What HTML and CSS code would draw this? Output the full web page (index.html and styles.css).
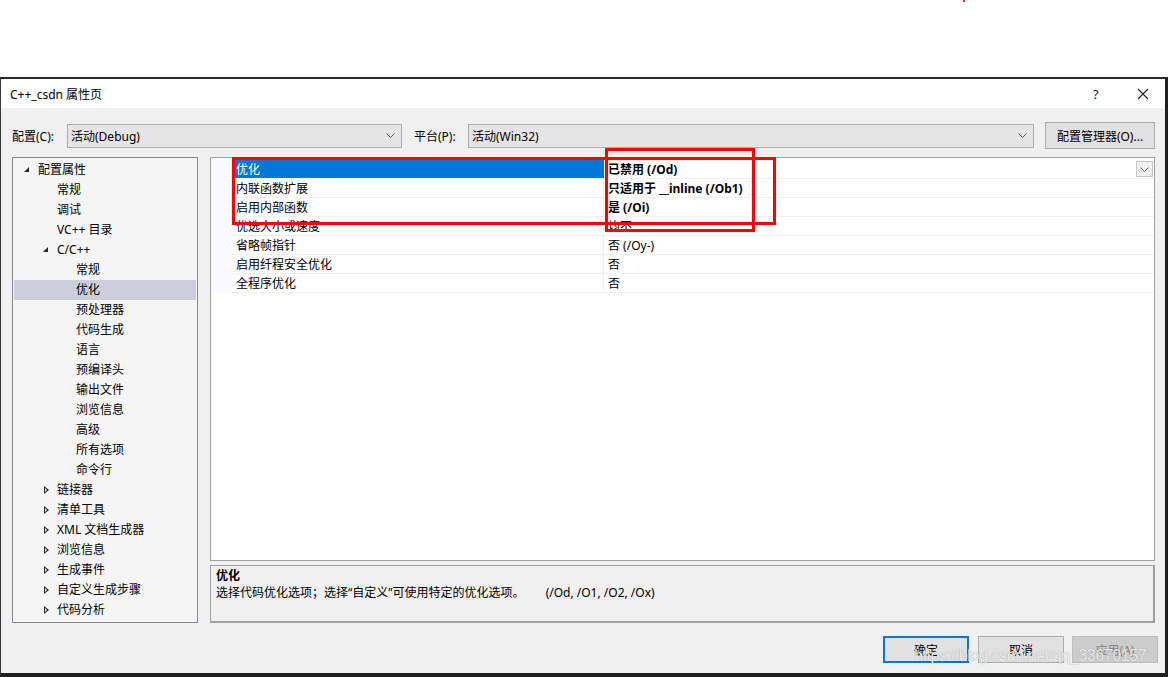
FILE: index.html
```html
<!DOCTYPE html>
<html>

<head>
    <meta charset="utf-8">
    <title>C++_csdn 属性页</title>
    <link rel="stylesheet" href="styles.css">
</head>

<body>
    <div class="top-space"></div>
    <div class="dialog">
        <div class="titlebar">
            <span class="title">C++_csdn 属性页</span>
            <span class="help">?</span>
            <svg class="close" width="12" height="12" viewBox="0 0 12 12"><path d="M1 1L11 11M11 1L1 11" stroke="#222" stroke-width="1.1" fill="none"/></svg>
        </div>
        <div class="body">
            <div class="config-row">
                <label class="lbl lbl-config">配置(C):</label>
                <div class="combo combo-config">
                    <span>活动(Debug)</span>
                    <svg width="9" height="5" viewBox="0 0 9 5"><path d="M0.5 0.5L4.5 4.5L8.5 0.5" stroke="#555" fill="none"/></svg>
                </div>
                <label class="lbl lbl-platform">平台(P):</label>
                <div class="combo combo-platform">
                    <span>活动(Win32)</span>
                    <svg width="9" height="5" viewBox="0 0 9 5"><path d="M0.5 0.5L4.5 4.5L8.5 0.5" stroke="#555" fill="none"/></svg>
                </div>
                <button class="btn btn-manager">配置管理器(O)...</button>
            </div>

            <div class="main">
                <div class="tree">
                    <div class="node lvl0"><span class="arrow open"></span>配置属性</div>
                    <div class="node lvl1"><span class="arrow"></span>常规</div>
                    <div class="node lvl1"><span class="arrow"></span>调试</div>
                    <div class="node lvl1"><span class="arrow"></span>VC++ 目录</div>
                    <div class="node lvl1"><span class="arrow open"></span>C/C++</div>
                    <div class="node lvl2"><span class="arrow"></span>常规</div>
                    <div class="node lvl2 selected"><span class="arrow"></span>优化</div>
                    <div class="node lvl2"><span class="arrow"></span>预处理器</div>
                    <div class="node lvl2"><span class="arrow"></span>代码生成</div>
                    <div class="node lvl2"><span class="arrow"></span>语言</div>
                    <div class="node lvl2"><span class="arrow"></span>预编译头</div>
                    <div class="node lvl2"><span class="arrow"></span>输出文件</div>
                    <div class="node lvl2"><span class="arrow"></span>浏览信息</div>
                    <div class="node lvl2"><span class="arrow"></span>高级</div>
                    <div class="node lvl2"><span class="arrow"></span>所有选项</div>
                    <div class="node lvl2"><span class="arrow"></span>命令行</div>
                    <div class="node lvl1"><span class="arrow closed"></span>链接器</div>
                    <div class="node lvl1"><span class="arrow closed"></span>清单工具</div>
                    <div class="node lvl1"><span class="arrow closed"></span>XML 文档生成器</div>
                    <div class="node lvl1"><span class="arrow closed"></span>浏览信息</div>
                    <div class="node lvl1"><span class="arrow closed"></span>生成事件</div>
                    <div class="node lvl1"><span class="arrow closed"></span>自定义生成步骤</div>
                    <div class="node lvl1"><span class="arrow closed"></span>代码分析</div>
                </div>

                <div class="right">
                    <div class="grid">
                        <div class="rows">
                            <div class="row selected">
                                <div class="name">优化</div>
                                <div class="value bold">已禁用 (/Od)
                                    <span class="drop"><svg width="9" height="5" viewBox="0 0 9 5"><path d="M0.5 0.5L4.5 4.5L8.5 0.5" stroke="#666" fill="none"/></svg></span>
                                </div>
                            </div>
                            <div class="row">
                                <div class="name">内联函数扩展</div>
                                <div class="value bold">只适用于 __inline (/Ob1)</div>
                            </div>
                            <div class="row">
                                <div class="name">启用内部函数</div>
                                <div class="value bold">是 (/Oi)</div>
                            </div>
                            <div class="row">
                                <div class="name">优选大小或速度</div>
                                <div class="value">均不</div>
                            </div>
                            <div class="row">
                                <div class="name">省略帧指针</div>
                                <div class="value">否 (/Oy-)</div>
                            </div>
                            <div class="row">
                                <div class="name">启用纤程安全优化</div>
                                <div class="value">否</div>
                            </div>
                            <div class="row">
                                <div class="name">全程序优化</div>
                                <div class="value">否</div>
                            </div>
                        </div>
                    </div>
                    <div class="desc">
                        <div class="desc-title">优化</div>
                        <div class="desc-text">选择代码优化选项；选择“自定义”可使用特定的优化选项。<span class="desc-flags">(/Od, /O1, /O2, /Ox)</span></div>
                    </div>
                </div>
            </div>

            <div class="buttons">
                <button class="btn btn-ok">确定</button>
                <button class="btn btn-cancel">取消</button>
                <button class="btn btn-disabled">应用(A)</button>
            </div>
        </div>
    </div>

    <!-- annotation boxes drawn over the screenshot -->
    <div class="mark mark-a"></div>
    <div class="mark mark-b"></div>
    <div class="dot"></div>
    <div class="watermark">https://blog.csdn.net/qq_33670157</div>
</body>
</html>
```

FILE: styles.css
```css
html, body {
    margin: 0;
    padding: 0;
    background: #ffffff;
}

body {
    position: relative;
    width: 1168px;
    height: 677px;
    overflow: hidden;
    font-family: "Segoe UI", "Noto Sans", "Noto Sans CJK SC", sans-serif;
    font-size: 12px;
    color: #000;
}

.top-space {
    height: 77px;
}

.dialog {
    height: 600px;
    box-sizing: border-box;
    border-top: 2px solid #2b2b2b;
    border-left: 1px solid #3a3a3a;
    border-right: 3px solid #1f1f1f;
    border-bottom: 4px solid #1f1f1f;
    display: flex;
    flex-direction: column;
}

.titlebar {
    height: 29px;
    flex: none;
    background: #fff;
    display: flex;
    align-items: center;
    padding: 0 0 0 9px;
}

.title {
    flex: 1;
    font-size: 12px;
}

.help {
    width: 14px;
    margin-right: 30px;
    font-size: 13px;
    color: #222;
}

.close {
    margin-right: 16px;
}

.body {
    flex: 1;
    background: #f0f0f0;
    padding: 14px 10px 0 11px;
}

.config-row {
    display: flex;
    align-items: center;
    height: 27px;
}

.lbl {
    flex: none;
}

.lbl-config {
    width: 55px;
}

.lbl-platform {
    width: 54px;
    margin-left: 12px;
}

.combo {
    flex: none;
    height: 24px;
    box-sizing: border-box;
    border: 1px solid #adadad;
    background: #e5e5e5;
    display: flex;
    align-items: center;
    justify-content: space-between;
    padding: 0 6px 0 3px;
}

.combo-config {
    width: 335px;
}

.combo-platform {
    width: 566px;
}

.btn {
    font-family: inherit;
    font-size: 12px;
    color: #000;
    background: #e1e1e1;
    border: 1px solid #adadad;
    height: 27px;
    width: 86px;
    padding: 0;
    box-sizing: border-box;
}

.btn-manager {
    width: 110px;
    margin-left: 11px;
}

.main {
    display: flex;
    margin-top: 8px;
    height: 466px;
}

.tree {
    width: 186px;
    flex: none;
    box-sizing: border-box;
    border: 1px solid #828790;
    background: #f5f5f5;
    padding-top: 2px;
}

.node {
    height: 20px;
    line-height: 20px;
    display: flex;
    align-items: center;
    white-space: nowrap;
    margin: 0 1px 0 0;
    padding-left: 10px;
}

.node.lvl1 {
    padding-left: 29px;
}

.node.lvl2 {
    padding-left: 48px;
}

.node.selected {
    background: #cccedb;
    margin-left: 1px;
    padding-left: 47px;
}

.arrow {
    width: 15px;
    height: 20px;
    flex: none;
    position: relative;
}

.arrow.open::before {
    content: "";
    position: absolute;
    left: 1px;
    top: 7px;
    border-style: solid;
    border-width: 0 0 5px 5px;
    border-color: transparent transparent #262626 transparent;
}

.arrow.closed::before {
    content: "";
    position: absolute;
    left: 2px;
    top: 6px;
    width: 0;
    height: 0;
    border-style: solid;
    border-width: 4px 0 4px 5px;
    border-color: transparent transparent transparent #262626;
}

.arrow.closed::after {
    content: "";
    position: absolute;
    left: 3px;
    top: 8px;
    width: 0;
    height: 0;
    border-style: solid;
    border-width: 2px 0 2px 2.5px;
    border-color: transparent transparent transparent #f5f5f5;
}

.right {
    flex: 1;
    margin-left: 12px;
    display: flex;
    flex-direction: column;
}

.grid {
    height: 404px;
    flex: none;
    box-sizing: border-box;
    border: 1px solid #a0a0a0;
    background: #fff;
    padding-top: 2px;
}

.rows {
    padding-left: 21px;
    background: #f7f9fc;
}

.row {
    display: flex;
    height: 19px;
    box-sizing: border-box;
    border-bottom: 1px solid #f0f0f0;
    background: #fff;
}

.row .name {
    width: 372px;
    flex: none;
    box-sizing: border-box;
    padding-left: 4px;
    line-height: 19px;
    border-right: 1px solid #f0f0f0;
    white-space: nowrap;
}

.row.selected .name {
    background: #0078d7;
    color: #fff;
    border-right-color: #0078d7;
}

.row .value {
    flex: 1;
    padding-left: 4px;
    line-height: 19px;
    position: relative;
    white-space: nowrap;
}

.bold {
    font-weight: bold;
}

.drop {
    position: absolute;
    right: 1px;
    top: 1px;
    width: 17px;
    height: 16px;
    box-sizing: border-box;
    border: 1px solid #c6c6c6;
    background: #f0f0f0;
    display: flex;
    align-items: center;
    justify-content: center;
}

.desc {
    margin-top: 4px;
    flex: 1;
    box-sizing: border-box;
    border: 1px solid #a0a0a0;
    border-right-width: 2px;
    border-bottom-width: 2px;
    background: #f0f0f0;
    padding: 1px 0 0 5px;
}

.desc-title {
    font-weight: bold;
    line-height: 17px;
}

.desc-text {
    line-height: 17px;
}

.desc-flags {
    margin-left: 21px;
}

.buttons {
    display: flex;
    justify-content: flex-end;
    margin-top: 13px;
    margin-right: -3px;
}

.btn-ok {
    border: 2px solid #0078d7;
    margin-right: 9px;
}

.btn-cancel {
    margin-right: 8px;
}

.btn-disabled {
    background: #cccccc;
    border-color: #bfbfbf;
    color: #838383;
}

.mark {
    position: absolute;
    border: 3px solid #ff0000;
    box-sizing: border-box;
}

.mark-a {
    left: 232px;
    top: 157px;
    width: 544px;
    height: 68px;
}

.mark-b {
    left: 605px;
    top: 148px;
    width: 150px;
    height: 84px;
}

.dot {
    position: absolute;
    left: 963px;
    top: 0;
    width: 2px;
    height: 2px;
    background: #f03030;
}

.watermark {
    position: absolute;
    left: 914px;
    top: 647px;
    font-family: "Liberation Sans", Arial, sans-serif;
    font-size: 16px;
    letter-spacing: -0.4px;
    color: rgba(255, 255, 255, 0.8);
    text-shadow: 0 0 1px rgba(110, 110, 110, 0.7);
    white-space: nowrap;
}
```
